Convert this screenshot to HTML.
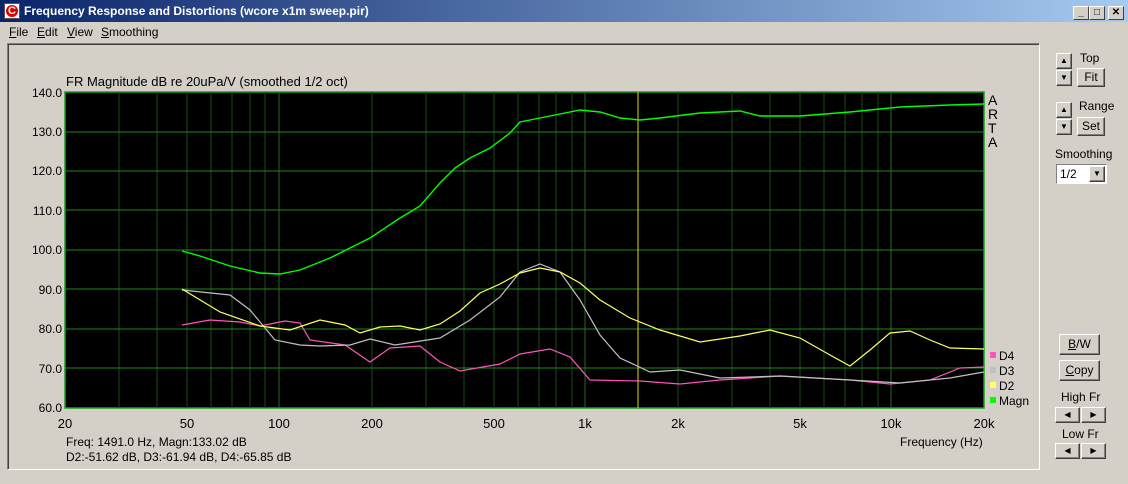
<!DOCTYPE html>
<html><head><meta charset="utf-8"><style>
html,body{margin:0;padding:0;width:1128px;height:484px;overflow:hidden;background:#d4d0c8;font-family:"Liberation Sans",sans-serif;}
.tb{position:absolute;left:0;top:0;width:1128px;height:22px;background:linear-gradient(to right,#0a246a,#a6caf0);}
.tt{position:absolute;left:24px;top:4px;color:#fff;font-weight:bold;font-size:12px;}
.wb{position:absolute;top:6px;width:14px;height:12px;background:#d4d0c8;border:1px solid;border-color:#fff #404040 #404040 #fff;font-size:10px;text-align:center;line-height:12px;font-weight:bold;}
.menu{position:absolute;top:25px;font-size:12px;}
.btn{position:absolute;background:#d4d0c8;border:1px solid;border-color:#fff #404040 #404040 #fff;box-shadow:inset -1px -1px #808080;font-size:12px;text-align:center;box-sizing:border-box;}
.lbl{position:absolute;font-size:12px;}
</style></head><body>
<div class="tb"><div style="position:absolute;left:4px;top:3px;width:16px;height:16px;background:#fff;border:1px solid #555;box-sizing:border-box"><div style="position:absolute;left:1px;top:1px;width:12px;height:12px;border-radius:50%;background:#d00;color:#fff;font-size:11px;font-weight:bold;line-height:12px;text-align:center">C</div></div><div class="tt">Frequency Response and Distortions (wcore x1m sweep.pir)</div>
<div class="wb" style="left:1073px">_</div><div class="wb" style="left:1089px">□</div><div class="wb" style="left:1108px">✕</div></div>
<div class="menu" style="left:9px"><u>F</u>ile</div><div class="menu" style="left:37px"><u>E</u>dit</div><div class="menu" style="left:67px"><u>V</u>iew</div><div class="menu" style="left:101px"><u>S</u>moothing</div>
<div style="position:absolute;left:7px;top:43px;width:1033px;height:427px;border:1px solid;border-color:#808080 #fff #fff #808080;box-shadow:inset 1px 1px #404040;box-sizing:border-box"></div>
<svg width="1128" height="484" style="position:absolute;left:0;top:0" font-family="Liberation Sans, sans-serif" font-size="12">
<text x="66" y="86" font-size="13" fill="#000">FR Magnitude dB re 20uPa/V (smoothed 1/2 oct)</text>
<rect x="65" y="92" width="919" height="316" fill="#000" stroke="#1aa01a" stroke-width="1.5"/>
<g stroke="#1a4a1a" stroke-width="1">
<line x1="119" y1="92" x2="119" y2="408"/><line x1="157" y1="92" x2="157" y2="408"/><line x1="187" y1="92" x2="187" y2="408"/><line x1="211" y1="92" x2="211" y2="408"/><line x1="232" y1="92" x2="232" y2="408"/><line x1="250" y1="92" x2="250" y2="408"/><line x1="265" y1="92" x2="265" y2="408"/>
<line x1="372" y1="92" x2="372" y2="408"/><line x1="426" y1="92" x2="426" y2="408"/><line x1="464" y1="92" x2="464" y2="408"/><line x1="494" y1="92" x2="494" y2="408"/><line x1="518" y1="92" x2="518" y2="408"/><line x1="539" y1="92" x2="539" y2="408"/><line x1="556" y1="92" x2="556" y2="408"/><line x1="572" y1="92" x2="572" y2="408"/>
<line x1="678" y1="92" x2="678" y2="408"/><line x1="732" y1="92" x2="732" y2="408"/><line x1="770" y1="92" x2="770" y2="408"/><line x1="800" y1="92" x2="800" y2="408"/><line x1="824" y1="92" x2="824" y2="408"/><line x1="845" y1="92" x2="845" y2="408"/><line x1="862" y1="92" x2="862" y2="408"/><line x1="878" y1="92" x2="878" y2="408"/>
</g>
<g stroke="#1f6a1f"><line x1="279" y1="92" x2="279" y2="408"/><line x1="585" y1="92" x2="585" y2="408"/><line x1="891" y1="92" x2="891" y2="408"/></g>
<g stroke="#1a8a1a"><line x1="65" y1="132" x2="984" y2="132"/><line x1="65" y1="171" x2="984" y2="171"/><line x1="65" y1="210" x2="984" y2="210"/><line x1="65" y1="250" x2="984" y2="250"/><line x1="65" y1="289" x2="984" y2="289"/><line x1="65" y1="329" x2="984" y2="329"/><line x1="65" y1="368" x2="984" y2="368"/></g>
<line x1="638" y1="92" x2="638" y2="408" stroke="#e0e000"/>
<g fill="none" stroke-width="1.2">
<polyline stroke="#ff55bb" points="182,325 210,320 240,322 260,326 285,321 300,323 310,340 345,345 370,362 390,348 420,346 440,362 460,371 500,364 520,354 550,349 570,357 590,380 640,381 680,384 720,380 780,376 850,380 890,384 930,380 960,368 984,367"/>
<polyline stroke="#c0c0c0" points="182,290 230,295 250,310 275,340 300,345 320,346 350,345 370,339 395,345 440,338 470,320 500,297 520,272 540,264 560,272 580,300 600,335 620,358 650,372 680,370 720,378 780,376 850,380 900,383 950,378 984,372"/>
<polyline stroke="#ffff66" points="182,289 220,312 260,326 290,330 320,320 345,325 360,333 380,327 400,326 420,330 440,324 460,311 480,293 500,284 520,273 540,268 560,272 580,283 600,300 630,318 660,330 700,342 740,336 770,330 800,338 830,355 850,366 870,350 890,333 910,331 930,340 950,348 984,349"/>
<polyline stroke="#00ff00" stroke-width="1.4" points="182,251 200,256 230,266 260,273 280,274 300,270 330,258 370,238 400,218 420,206 440,183 455,168 470,158 490,148 510,133 520,122 540,118 560,114 580,110 600,112 620,118 640,120 660,118 700,113 740,111 760,116 800,116 850,112 900,107 950,105 984,104"/>
</g>
<g text-anchor="end" fill="#000"><text x="62" y="97">140.0</text><text x="62" y="136">130.0</text><text x="62" y="175">120.0</text><text x="62" y="215">110.0</text><text x="62" y="254">100.0</text><text x="62" y="294">90.0</text><text x="62" y="333">80.0</text><text x="62" y="373">70.0</text><text x="62" y="412">60.0</text></g>
<g text-anchor="middle" fill="#000" font-size="13"><text x="65" y="428">20</text><text x="187" y="428">50</text><text x="279" y="428">100</text><text x="372" y="428">200</text><text x="494" y="428">500</text><text x="585" y="428">1k</text><text x="678" y="428">2k</text><text x="800" y="428">5k</text><text x="891" y="428">10k</text><text x="984" y="428">20k</text></g>
<text x="900" y="446" font-size="12">Frequency (Hz)</text>
<text x="66" y="446">Freq: 1491.0 Hz, Magn:133.02 dB</text>
<text x="66" y="461">D2:-51.62 dB, D3:-61.94 dB, D4:-65.85 dB</text>
<g font-size="14"><text x="988" y="105">A</text><text x="988" y="119">R</text><text x="988" y="133">T</text><text x="988" y="147">A</text></g>
<rect x="990" y="352" width="6" height="6" fill="#ff55bb"/><text x="999" y="360">D4</text>
<rect x="990" y="367" width="6" height="6" fill="#c0c0c0"/><text x="999" y="375">D3</text>
<rect x="990" y="382" width="6" height="6" fill="#ffff66"/><text x="999" y="390">D2</text>
<rect x="990" y="397" width="6" height="6" fill="#00ff00"/><text x="999" y="405">Magn</text>
</svg>
<div class="btn" style="left:1056px;top:53px;width:16px;height:16px;font-size:8px;line-height:14px">▲</div>
<div class="btn" style="left:1056px;top:70px;width:16px;height:16px;font-size:8px;line-height:14px">▼</div>
<div class="lbl" style="left:1080px;top:51px">Top</div>
<div class="btn" style="left:1077px;top:68px;width:28px;height:19px;line-height:17px">Fit</div>
<div class="btn" style="left:1056px;top:102px;width:16px;height:16px;font-size:8px;line-height:14px">▲</div>
<div class="btn" style="left:1056px;top:119px;width:16px;height:16px;font-size:8px;line-height:14px">▼</div>
<div class="lbl" style="left:1079px;top:99px">Range</div>
<div class="btn" style="left:1077px;top:117px;width:28px;height:19px;line-height:17px">Set</div>
<div class="lbl" style="left:1055px;top:147px">Smoothing</div>
<div style="position:absolute;left:1056px;top:164px;width:51px;height:20px;background:#fff;border:1px solid;border-color:#808080 #fff #fff #808080;box-sizing:border-box;font-size:12px;line-height:18px;padding-left:3px">1/2</div>
<div class="btn" style="left:1089px;top:166px;width:16px;height:16px;font-size:8px;line-height:14px">▼</div>
<div class="btn" style="left:1059px;top:334px;width:41px;height:21px;line-height:19px"><u>B</u>/W</div>
<div class="btn" style="left:1059px;top:360px;width:41px;height:21px;line-height:19px"><u>C</u>opy</div>
<div class="lbl" style="left:1061px;top:390px">High Fr</div>
<div class="btn" style="left:1055px;top:407px;width:25px;height:16px;font-size:8px;line-height:14px">◀</div>
<div class="btn" style="left:1081px;top:407px;width:25px;height:16px;font-size:8px;line-height:14px">▶</div>
<div class="lbl" style="left:1062px;top:427px">Low Fr</div>
<div class="btn" style="left:1055px;top:443px;width:25px;height:16px;font-size:8px;line-height:14px">◀</div>
<div class="btn" style="left:1081px;top:443px;width:25px;height:16px;font-size:8px;line-height:14px">▶</div>
</body></html>
